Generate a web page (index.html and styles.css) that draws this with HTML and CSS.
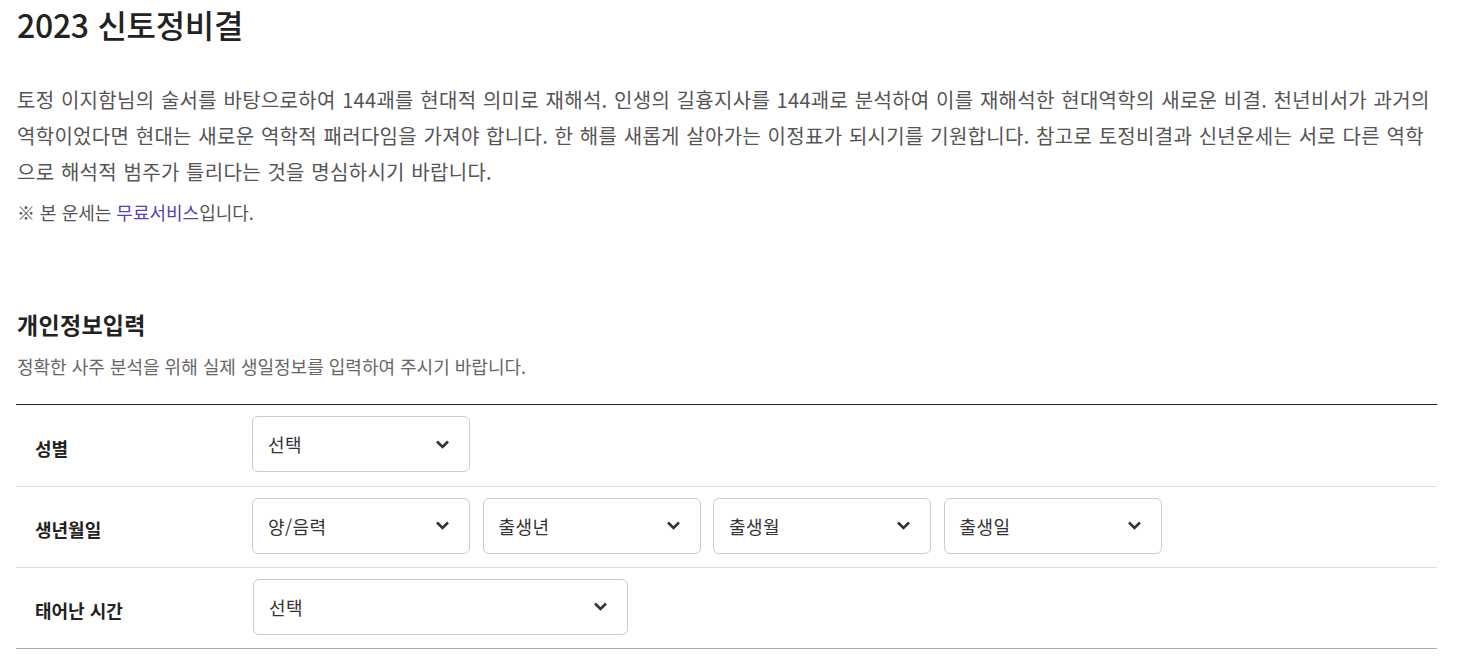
FILE: index.html
```html
<!DOCTYPE html>
<html lang="ko">
<head>
    <meta charset="UTF-8">
    <link rel="stylesheet" href="styles.css">
    <title>2023 신토정비결</title>
</head>
<body>
    <div class="wrap">
        <h1 class="title">2023 신토정비결</h1>
        <p class="intro">토정 이지함님의 술서를 바탕으로하여 144괘를 현대적 의미로 재해석. 인생의 길흉지사를 144괘로 분석하여 이를 재해석한 현대역학의 새로운 비결. 천년비서가 과거의 역학이었다면 현대는 새로운 역학적 패러다임을 가져야 합니다. 한 해를 새롭게 살아가는 이정표가 되시기를 기원합니다. 참고로 토정비결과 신년운세는 서로 다른 역학으로 해석적 범주가 틀리다는 것을 명심하시기 바랍니다.</p>
        <p class="note">※ 본 운세는 <a href="#" class="free">무료서비스</a>입니다.</p>

        <h2 class="section-title">개인정보입력</h2>
        <p class="section-desc">정확한 사주 분석을 위해 실제 생일정보를 입력하여 주시기 바랍니다.</p>

        <div class="form-table">
            <div class="form-row">
                <div class="label">성별</div>
                <div class="fields">
                    <div class="select">선택<svg class="chev" viewBox="0 0 14 9"><path d="M1.5 1.5 7 7l5.5-5.5"/></svg></div>
                </div>
            </div>
            <div class="form-row">
                <div class="label">생년월일</div>
                <div class="fields">
                    <div class="select">양/음력<svg class="chev" viewBox="0 0 14 9"><path d="M1.5 1.5 7 7l5.5-5.5"/></svg></div>
                    <div class="select">출생년<svg class="chev" viewBox="0 0 14 9"><path d="M1.5 1.5 7 7l5.5-5.5"/></svg></div>
                    <div class="select">출생월<svg class="chev" viewBox="0 0 14 9"><path d="M1.5 1.5 7 7l5.5-5.5"/></svg></div>
                    <div class="select">출생일<svg class="chev" viewBox="0 0 14 9"><path d="M1.5 1.5 7 7l5.5-5.5"/></svg></div>
                </div>
            </div>
            <div class="form-row">
                <div class="label">태어난 시간</div>
                <div class="fields">
                    <div class="select wide">선택<svg class="chev" viewBox="0 0 14 9"><path d="M1.5 1.5 7 7l5.5-5.5"/></svg></div>
                </div>
            </div>
        </div>
    </div>
</body>
</html>
```

FILE: styles.css
```css
body {
    margin: 0;
    background: #ffffff;
    color: #333333;
    font-family: "Noto Sans CJK KR", "Noto Sans", sans-serif;
}

.wrap {
    width: 1421px;
    margin-left: 16px;
}

.title {
    margin: 0;
    padding-top: 4px;
    padding-left: 1px;
    font-size: 32px;
    line-height: 40px;
    font-weight: 500;
    color: #222222;
    letter-spacing: -0.3px;
}

.intro {
    margin: 38px 0 0;
    padding-left: 1px;
    font-size: 20px;
    line-height: 36px;
    color: #555555;
    letter-spacing: 0.3px;
    word-spacing: 0.6px;
}

.note {
    margin: 8px 0 0;
    padding-left: 1px;
    font-size: 18px;
    line-height: 28px;
    color: #555555;
}

.free {
    color: #5a3fb3;
    text-decoration: none;
}

.section-title {
    margin: 83px 0 0;
    padding-left: 1px;
    font-size: 23px;
    line-height: 30px;
    font-weight: 700;
    color: #222222;
    letter-spacing: 0.3px;
}

.section-desc {
    margin: 14px 0 0;
    padding-left: 1px;
    font-size: 18px;
    line-height: 26px;
    color: #666666;
}

.form-table {
    margin-top: 25px;
    border-top: 1px solid #222222;
    border-bottom: 1px solid #aaaaaa;
}

.form-row {
    display: flex;
    align-items: center;
    height: 80px;
    border-top: 1px solid #dddddd;
}

.form-row:first-child {
    height: 81px;
    border-top: none;
}

.label {
    width: 236px;
    padding-left: 19px;
    padding-top: 4px;
    box-sizing: border-box;
    font-size: 18px;
    font-weight: 700;
    color: #222222;
}

.fields {
    display: flex;
    gap: 12.5px;
    margin-top: -3px;
}

.select {
    width: 218px;
    height: 56px;
    box-sizing: border-box;
    border: 1px solid #cccccc;
    border-radius: 6px;
    display: flex;
    align-items: center;
    justify-content: space-between;
    padding: 0 19px 0 15px;
    font-size: 18px;
    letter-spacing: 0.4px;
    color: #333333;
}

.select.wide {
    width: 375px;
    margin-left: 1px;
}

.chev {
    width: 15px;
    height: 9px;
    fill: none;
    stroke: #333333;
    stroke-width: 2.6;
}
```
